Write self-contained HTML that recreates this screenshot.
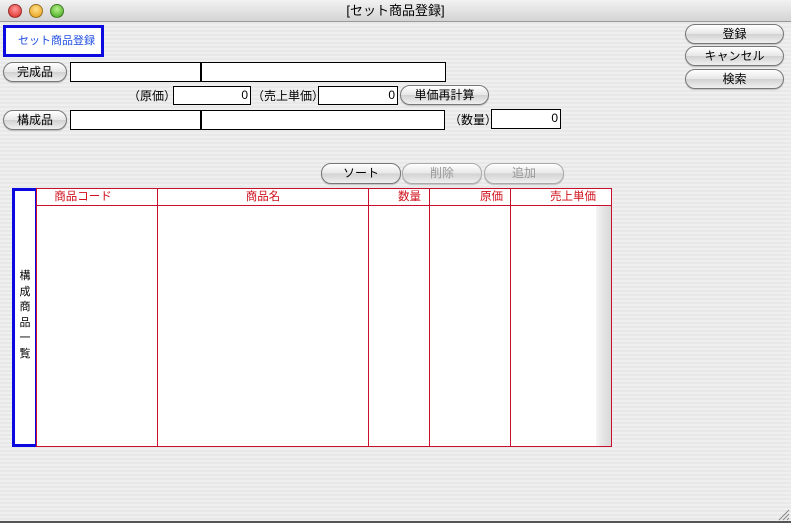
<!DOCTYPE html>
<html><head><meta charset="utf-8"><style>
*{box-sizing:border-box;margin:0;padding:0}
body{width:791px;height:523px;overflow:hidden;background:#ededed;font-family:"Liberation Sans","Noto Sans CJK JP",sans-serif;font-size:12px;color:#000;position:relative;
background-image:repeating-linear-gradient(#efefef 0 2px,#e8e8e8 2px 4px)}
.a{position:absolute}
.tb{left:0;top:0;width:791px;height:22px;background:linear-gradient(#f2f2f2,#d4d4d4);border-bottom:1px solid #999;text-align:center;font-size:13px;line-height:22px}
.dot{top:4px;width:14px;height:14px;border-radius:50%;border:1px solid rgba(0,0,0,.35)}
.btn{border:1px solid #777;border-radius:10px;background:linear-gradient(#fff,#e6e6e6 50%,#d2d2d2 51%,#f0f0f0);text-align:center;font-size:12px;box-shadow:0 1px 1px rgba(0,0,0,.2)}
.btn.dis{color:#999;border-color:#aaa}
.in{background:#fff;border:1px solid #000;text-align:right;padding-right:2px;font-size:12px;line-height:17px}
.lb{font-size:12px}
.red{color:#d0101c;font-size:11.5px;text-align:center;line-height:16px}
.vl{width:1px;background:#c8102e}
</style></head><body>
<div class="a tb">[セット商品登録]</div>
<div class="a dot" style="left:8px;background:radial-gradient(circle at 50% 35%,#ff9a9a,#d8221c)"></div>
<div class="a dot" style="left:29px;background:radial-gradient(circle at 50% 35%,#ffe08a,#e59a10)"></div>
<div class="a dot" style="left:50px;background:radial-gradient(circle at 50% 35%,#b8f08a,#3aa418)"></div>

<div class="a" style="left:3px;top:25px;width:101px;height:32px;border:3px solid #0a0ae0;background:#fff;color:#1f4fe0;font-size:11px;line-height:26px;padding-left:12px">セット商品登録</div>

<div class="a btn" style="left:685px;top:24px;width:99px;height:20px;line-height:18px">登録</div>
<div class="a btn" style="left:685px;top:46px;width:99px;height:20px;line-height:18px">キャンセル</div>
<div class="a btn" style="left:685px;top:69px;width:99px;height:20px;line-height:18px">検索</div>

<div class="a btn" style="left:3px;top:62px;width:64px;height:20px;line-height:18px">完成品</div>
<div class="a in" style="left:70px;top:62px;width:131px;height:20px"></div>
<div class="a in" style="left:201px;top:62px;width:245px;height:20px"></div>

<div class="a lb" style="left:128px;top:87px">（原価）</div>
<div class="a in" style="left:173px;top:86px;width:78px;height:19px">0</div>
<div class="a lb" style="left:252px;top:87px">（売上単価）</div>
<div class="a in" style="left:318px;top:86px;width:80px;height:19px">0</div>
<div class="a btn" style="left:400px;top:85px;width:89px;height:20px;line-height:18px">単価再計算</div>

<div class="a btn" style="left:3px;top:110px;width:64px;height:20px;line-height:18px">構成品</div>
<div class="a in" style="left:70px;top:110px;width:131px;height:20px"></div>
<div class="a in" style="left:201px;top:110px;width:244px;height:20px"></div>
<div class="a lb" style="left:449px;top:111px">（数量）</div>
<div class="a in" style="left:491px;top:109px;width:70px;height:20px">0</div>

<div class="a btn" style="left:321px;top:163px;width:80px;height:21px;line-height:19px">ソート</div>
<div class="a btn dis" style="left:402px;top:163px;width:80px;height:21px;line-height:19px">削除</div>
<div class="a btn dis" style="left:484px;top:163px;width:80px;height:21px;line-height:19px">追加</div>

<div class="a" style="left:12px;top:188px;width:25px;height:259px;border:3px solid #0a0ae0;border-right-width:2px;background:#fff;font-size:11px;line-height:15.5px;text-align:center;padding-top:78px">構<br>成<br>商<br>品<br>一<br>覧</div>
<div class="a" style="left:36px;top:188px;width:576px;height:259px;border:1px solid #c8102e;background:#fff"></div>
<div class="a" style="left:596px;top:205px;width:15px;height:241px;background:linear-gradient(90deg,#f4f4f4,#e4e4e4 50%,#d8d8d8)"></div>
<div class="a" style="left:36px;top:205px;width:576px;height:1px;background:#c8102e"></div>
<div class="a vl" style="left:157px;top:188px;height:259px"></div>
<div class="a vl" style="left:368px;top:188px;height:259px"></div>
<div class="a vl" style="left:429px;top:188px;height:259px"></div>
<div class="a vl" style="left:510px;top:188px;height:259px"></div>
<div class="a red" style="left:37px;top:189px;width:92px">商品コード</div>
<div class="a red" style="left:158px;top:189px;width:210px">商品名</div>
<div class="a red" style="left:369px;top:189px;width:52px;text-align:right">数量</div>
<div class="a red" style="left:430px;top:189px;width:73px;text-align:right">原価</div>
<div class="a red" style="left:511px;top:189px;width:85px;text-align:right">売上単価</div>

<svg class="a" style="left:776px;top:507px" width="14" height="14"><path d="M3 13L13 3M7 13L13 7M11 13L13 11" stroke="#888" stroke-width="1"/></svg>
<div class="a" style="left:0;top:521px;width:791px;height:2px;background:#555"></div>
</body></html>
